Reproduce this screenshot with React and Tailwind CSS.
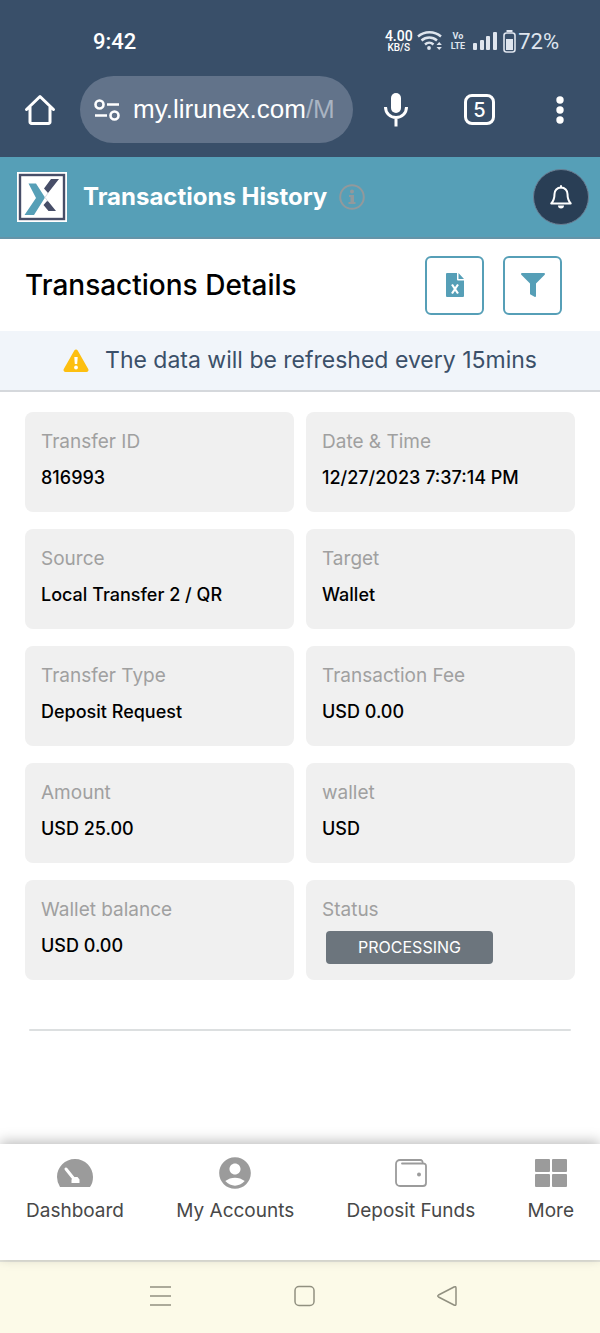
import { MdAccountCircle } from 'react-icons/md';

const details = [
  { label: 'Transfer ID', value: '816993' },
  { label: 'Date & Time', value: '12/27/2023 7:37:14 PM' },
  { label: 'Source', value: 'Local Transfer 2 / QR' },
  { label: 'Target', value: 'Wallet' },
  { label: 'Transfer Type', value: 'Deposit Request' },
  { label: 'Transaction Fee', value: 'USD 0.00' },
  { label: 'Amount', value: 'USD 25.00' },
  { label: 'wallet', value: 'USD' },
  { label: 'Wallet balance', value: 'USD 0.00' },
  { label: 'Status', status: 'PROCESSING' },
];

function StatusBar() {
  return (
    <div className="flex h-[74px] items-center justify-between pt-2 pr-[41px] pl-[93px] font-['Roboto',sans-serif]">
      <span className="text-[22px] font-medium">9:42</span>
      <div className="flex items-center text-[#dfe5ee]">
        <div className="mr-1 text-center font-medium text-white">
          <div className="text-[14px] leading-[14px]">4.00</div>
          <div className="text-[10px] leading-[10px]">KB/S</div>
        </div>
        <svg width="26" height="22" viewBox="0 0 26 22" fill="none" stroke="currentColor" strokeWidth="2.4" className="mr-2">
          <path d="M1 6.5C7.5.8 17.500.8 24 6.500M4.500 10.500c4.600-4 11-4 15.500 0M8 14.500c2.500-2.300 6-2.300 8.500 0" />
          <circle cx="12" cy="18" r="1.900" fill="currentColor" stroke="none" />
          <path d="M19.500 15l2.700-3 2.700 3zM19.500 17l2.700 3 2.700-3z" fill="currentColor" stroke="none" />
        </svg>
        <div className="mr-2 text-center text-[9px] leading-[10px] font-bold">
          <div>Vo</div>
          <div>LTE</div>
        </div>
        <svg width="25" height="18" viewBox="0 0 25 18" fill="currentColor" className="mr-[5px]">
          <rect x="0" y="11" width="4" height="7" rx="1" />
          <rect x="7" y="8" width="4" height="10" rx="1" />
          <rect x="13" y="4" width="4" height="14" rx="1" />
          <rect x="20" y="0" width="4" height="18" rx="1" />
        </svg>
        <svg width="13" height="23" viewBox="0 0 13 23" className="mr-[2px]">
          <path d="M3.500 1h6" stroke="currentColor" strokeWidth="2" />
          <rect x="1" y="3" width="11" height="19" rx="2.500" fill="none" stroke="currentColor" strokeWidth="1.600" />
          <rect x="3" y="9" width="7" height="11" fill="currentColor" />
        </svg>
        <span className="text-[22px]">72%</span>
      </div>
    </div>
  );
}

function BrowserBar() {
  return (
    <div className="flex h-[83px] items-start pt-[2px] pr-8 pl-6">
      <button aria-label="Home" className="flex h-[67px] w-8 items-center justify-center">
        <svg width="32" height="32" viewBox="0 0 32 32" fill="none" stroke="currentColor" strokeWidth="3" strokeLinejoin="round" strokeLinecap="round">
          <path d="M2.500 15.500L16 2.500l13.500 13M6 13v15a1.500 1.500 0 0 0 1.500 1.500h17A1.500 1.500 0 0 0 26 28V13" />
        </svg>
      </button>
      <div className="ml-6 flex h-[67px] min-w-0 flex-1 items-center rounded-full bg-[#62738a] pr-3 pl-[14px]">
        <svg width="26" height="22" viewBox="0 0 26 22" fill="none" stroke="currentColor" strokeWidth="2.600" className="mr-[13px] shrink-0">
          <circle cx="5.500" cy="5.500" r="4" />
          <path d="M13 5.500h12M1 16.500h12" />
          <circle cx="20.500" cy="16.500" r="4" />
        </svg>
        <div className="min-w-0 flex-1 overflow-hidden font-['Liberation_Sans',Arial,sans-serif] text-[26px] whitespace-nowrap">
          my.lirunex.com<span className="text-[#a9b4c2]">/M</span>
        </div>
      </div>
      <button aria-label="Voice search" className="ml-[31px] flex h-[67px] w-6 items-center justify-center">
        <svg width="24" height="34" viewBox="0 0 24 34" fill="none" stroke="currentColor" strokeWidth="3">
          <rect x="7" y="0" width="10" height="20" rx="5" fill="currentColor" stroke="none" />
          <path d="M1.500 14c0 6 4.500 10.500 10.500 10.500S22.500 20 22.500 14M12 24v9.500" />
        </svg>
      </button>
      <button aria-label="Open tabs" className="mt-[18px] ml-14 flex h-[31px] w-[31px] items-center justify-center rounded-[8px] border-3 border-white text-[20px] font-medium">
        5
      </button>
      <button aria-label="Menu" className="ml-[57px] flex h-[67px] w-4 items-center justify-center">
        <svg width="8" height="28" viewBox="0 0 8 28" fill="currentColor">
          <circle cx="4" cy="4" r="3.700" />
          <circle cx="4" cy="14" r="3.700" />
          <circle cx="4" cy="24" r="3.700" />
        </svg>
      </button>
    </div>
  );
}

function Logo() {
  return (
    <svg width="50" height="50" viewBox="0 0 50 50" className="mr-4">
      <rect width="50" height="50" fill="#fff" />
      <rect x="3" y="3" width="44" height="44" fill="none" stroke="#474e68" strokeWidth="2.400" />
      <path d="M11.500 11.500h7.500L28 25.500 17 43H7.500L19 26z" fill="#569fb7" />
      <path d="M34 7h8L31 21l-4-4.500zM30.500 28.500L39 39h-7.500L26.500 33z" fill="#474e68" />
      <path d="M31 21l-3 4.500 3 4" stroke="#d9dce2" strokeWidth="1" fill="none" />
    </svg>
  );
}

function PageHeader() {
  return (
    <header className="flex h-[82px] items-center border-b-2 border-[#6594a8] bg-[#569fb7] pr-[11px] pl-[17px] text-white">
      <Logo />
      <h1 className="text-[24px] font-bold">Transactions History</h1>
      <button aria-label="Information" className="ml-3">
        <svg width="26" height="26" viewBox="0 0 26 26" fill="none" stroke="#92999c" strokeWidth="2">
          <circle cx="13" cy="13" r="11.800" />
          <circle cx="13" cy="7.500" r="2" fill="#92999c" stroke="none" />
          <path d="M10 11h5v7h1.500v2h-7v-2H11.500v-5H10z" fill="#92999c" stroke="none" />
        </svg>
      </button>
      <button aria-label="Notifications" className="ml-auto flex h-14 w-14 items-center justify-center rounded-full border border-[#6b7f94] bg-[#293e55]">
        <svg width="22" height="24" viewBox="0 0 22 24" fill="none" stroke="currentColor" strokeWidth="2" strokeLinejoin="round">
          <path d="M11 2.500c-4 0-6.500 3-6.500 6.500 0 5-1.500 7.500-3.200 9.500h19.400C19 16.500 17.500 14 17.500 9c0-3.500-2.500-6.500-6.500-6.500z" />
          <path d="M11 1v1.500" strokeLinecap="round" />
          <path d="M8 20.500h6a3 3 0 0 1-6 0z" fill="currentColor" stroke="none" />
        </svg>
      </button>
    </header>
  );
}

function DetailCard({ item }) {
  return (
    <div className="h-[100px] rounded-lg bg-[#f0f0f0] px-4 pt-[15px]">
      <dt className="text-[19px] leading-[30px] text-[#a0a0a0]">{item.label}</dt>
      {item.status ? (
        <dd className="mt-[6px] ml-1 w-[167px] rounded-[4px] bg-[#6c757d] text-center text-[16px] leading-[33px] text-white">
          {item.status}
        </dd>
      ) : (
        <dd className="mt-[6px] text-[18px] leading-[30px] font-medium whitespace-nowrap text-black">{item.value}</dd>
      )}
    </div>
  );
}

function BottomNav() {
  const item = 'flex flex-col items-center gap-[10px]';
  return (
    <nav className="relative mt-auto flex h-[116px] justify-between bg-white px-[26px] pt-[13px] text-[19px] leading-6 text-[#484848] shadow-[0_-3px_12px_rgba(0,0,0,0.25)]">
      <a href="#dashboard" className={item}>
        <svg width="36" height="32" viewBox="0 0 36 32">
          <path d="M3 30A18 18 0 0 1 0 20C0 10 8 2 18 2s18 8 18 18c0 4-1 7-3 10z" fill="#9b9b9b" />
          <path d="M9 12l8 10" stroke="#fff" strokeWidth="3" strokeLinecap="round" />
          <path d="M14.500 26v-3.500l3-2.500h3l2 2.500V26z" fill="#fff" />
        </svg>
        Dashboard
      </a>
      <a href="#accounts" className={item}>
        <MdAccountCircle className="-my-[3px] size-[38px] text-[#9b9b9b]" />
        My Accounts
      </a>
      <a href="#deposit" className={item}>
        <svg width="32" height="32" viewBox="0 0 32 32" fill="none" stroke="#9b9b9b" strokeWidth="1.800">
          <path d="M7 6.500h21.500a2.500 2.500 0 0 1 2.500 2.500v17a3 3 0 0 1-3 3H5a4 4 0 0 1-4-4V7a4 4 0 0 1 4-4h20a2.500 2.500 0 0 1 2.500 3.500" strokeLinecap="round" />
          <circle cx="24" cy="17.500" r="2" fill="#9b9b9b" stroke="none" />
        </svg>
        Deposit Funds
      </a>
      <a href="#more" className={item}>
        <svg width="32" height="32" viewBox="0 0 32 32" fill="#9b9b9b">
          <rect x="0" y="2" width="15" height="13" rx="1" />
          <rect x="17" y="2" width="15" height="13" rx="1" />
          <rect x="0" y="17" width="15" height="13" rx="1" />
          <rect x="17" y="17" width="15" height="13" rx="1" />
        </svg>
        More
      </a>
    </nav>
  );
}

function SystemNav() {
  return (
    <div className="flex h-[73px] items-center justify-between border-t-2 border-[#e5e5dc] bg-[#fcfae8] pr-[141px] pb-[3px] pl-36 text-[#919080]">
      <button aria-label="Recent apps">
        <svg width="32" height="24" viewBox="0 0 32 24" fill="none" stroke="currentColor" strokeWidth="1.600">
          <path d="M6 3h21M6 12h21M6 21h21" />
        </svg>
      </button>
      <button aria-label="Home screen">
        <svg width="24" height="24" viewBox="0 0 24 24" fill="none" stroke="currentColor" strokeWidth="1.500">
          <rect x="1" y="2.500" width="19" height="19" rx="4" />
        </svg>
      </button>
      <button aria-label="Back">
        <svg width="24" height="24" viewBox="0 0 24 24" fill="none" stroke="currentColor" strokeWidth="1.500" strokeLinejoin="round">
          <path d="M3.500 11L19 3q2-1 2 1v16q0 2-2 1L3.500 13q-1.500-1 0-2z" />
        </svg>
      </button>
    </div>
  );
}

export default function App() {
  return (
    <div className="flex min-h-screen flex-col bg-white font-['Inter',sans-serif]">
      <div className="bg-[#394f69] text-white">
        <StatusBar />
        <BrowserBar />
      </div>
      <PageHeader />

      <main>
        <div className="flex h-[92px] items-center gap-[19px] pr-[38px] pl-[25px]">
          <h2 className="mr-auto text-[28px] font-medium text-black">Transactions Details</h2>
          <button aria-label="Export to Excel" className="flex h-[59px] w-[59px] items-center justify-center rounded-md border-2 border-[#569fb7]">
            <svg width="18" height="24" viewBox="0 0 18 24">
              <path d="M1 0h10v6.500a1 1 0 0 0 1 1h6V23a1 1 0 0 1-1 1H1a1 1 0 0 1-1-1V1a1 1 0 0 1 1-1zM12.500 0L18 6h-5.500z" fill="#569fb7" />
              <path d="M6 11.500l6 9M12 11.500l-6 9" stroke="#fff" strokeWidth="2.200" />
            </svg>
          </button>
          <button aria-label="Filter" className="flex h-[59px] w-[59px] items-center justify-center rounded-md border-2 border-[#569fb7]">
            <svg width="24" height="24" viewBox="0 0 24 24" fill="#569fb7">
              <path d="M1 0h22a1 1 0 0 1 .700 1.700L15 10.500V23a1 1 0 0 1-1.500.700L9.500 21.500a1 1 0 0 1-.500-1v-10L.300 1.700A1 1 0 0 1 1 0z" />
            </svg>
          </button>
        </div>

        <div className="flex h-[61px] items-center justify-center gap-4 border-b-2 border-[#d5d8dc] bg-[#f1f5fa] text-[23px] text-[#3b5069]">
          <svg width="26" height="24" viewBox="0 0 26 24">
            <path d="M11.300 1.500a2 2 0 0 1 3.400 0l10.500 18.500a2 2 0 0 1-1.700 3h-21a2 2 0 0 1-1.700-3z" fill="#fdbf10" />
            <path d="M11.300 8h3.400l-.500 7h-2.400z" fill="#fff" />
            <circle cx="13" cy="18.500" r="1.900" fill="#fff" />
          </svg>
          <p>The data will be refreshed every 15mins</p>
        </div>

        <dl className="grid grid-cols-2 gap-x-3 gap-y-[17px] px-[25px] pt-5">
          {details.map((item) => (
            <DetailCard key={item.label} item={item} />
          ))}
        </dl>
        <hr className="mx-[29px] mt-[49px] rounded border-t-2 border-[#dcdfe0]" />
      </main>

      <BottomNav />
      <SystemNav />
    </div>
  );
}
